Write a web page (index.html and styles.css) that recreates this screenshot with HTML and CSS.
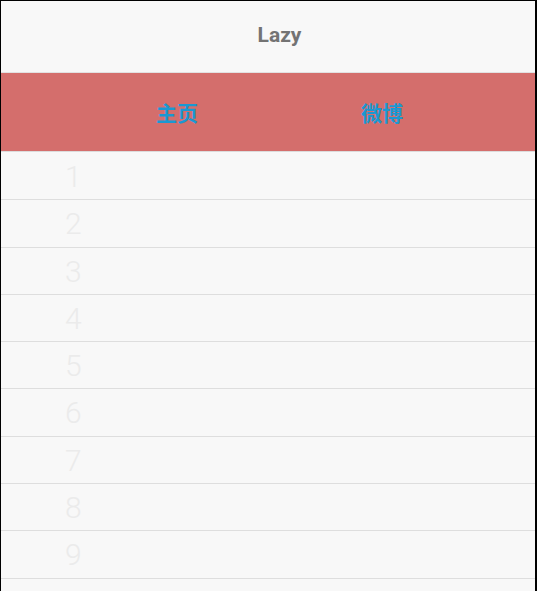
FILE: index.html
```html
<!DOCTYPE html>
<html>
<head>
<meta charset="utf-8">
<link rel="stylesheet" href="styles.css">
</head>
<body>
<div class="app">
  <header class="title-bar"><span class="title">Lazy</span></header>
  <nav class="tabs">
    <span class="tab">主页</span>
    <span class="tab">微博</span>
  </nav>
  <ul class="list">
    <li class="row">1</li>
    <li class="row">2</li>
    <li class="row">3</li>
    <li class="row">4</li>
    <li class="row">5</li>
    <li class="row">6</li>
    <li class="row">7</li>
    <li class="row">8</li>
    <li class="row">9</li>
    <li class="row row-empty"></li>
  </ul>
</div>
</body>
</html>
```
FILE: styles.css
```css
html, body {
  margin: 0;
  padding: 0;
  height: 100%;
  overflow: hidden;
  background: #000;
}
.app {
  box-sizing: border-box;
  height: 591px;
  margin: 1px 2px 0 1px;
  background: #f8f8f8;
  font-family: Roboto, "Noto Sans CJK SC", sans-serif;
  overflow: hidden;
}
.title-bar {
  height: 71px;
  border-bottom: 1px solid #e2e2e2;
  display: flex;
  align-items: center;
  justify-content: center;
  padding-left: 23px;
}
.title {
  font-size: 21px;
  font-weight: 700;
  color: #737373;
  margin-top: -3px;
}
.tabs {
  height: 78px;
  background: #d46e6c;
  border-bottom: 1px solid #dcdcdc;
  display: flex;
  align-items: center;
  justify-content: center;
  padding-left: 23px;
}
.tab {
  width: 205px;
  text-align: center;
  font-size: 21px;
  font-weight: 700;
  color: #1a98d2;
  font-family: "Noto Sans CJK SC", sans-serif;
}
.list {
  list-style: none;
  margin: 0;
  padding: 1px 0 0;
}
.row {
  box-sizing: border-box;
  height: 47.3px;
  border-bottom: 1px solid #dedede;
  padding-left: 64px;
  font-size: 30px;
  font-weight: 300;
  color: #ebebeb;
  line-height: 47px;
}
```
